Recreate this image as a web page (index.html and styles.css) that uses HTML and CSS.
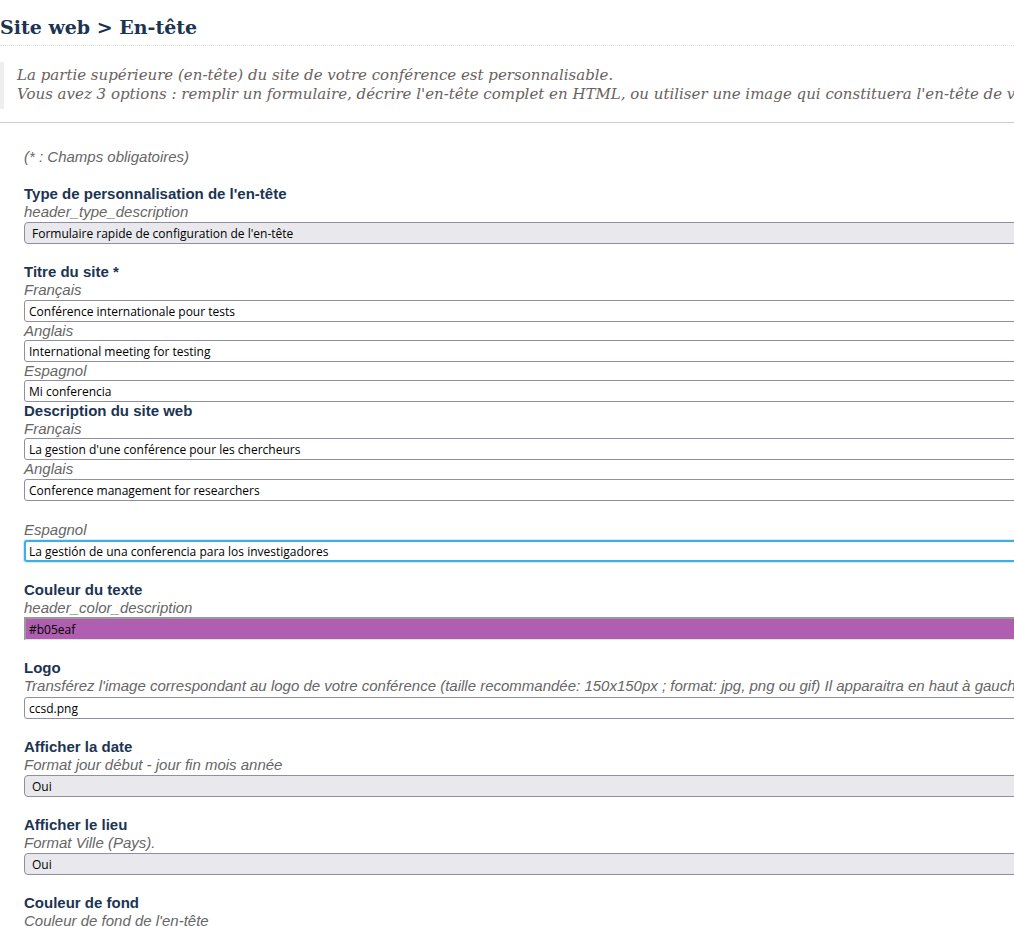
FILE: index.html
```html
<!DOCTYPE html>
<html lang="fr">
<head>
    <meta charset="UTF-8">
    <meta name="viewport" content="width=device-width, initial-scale=1.0">
    <title>Site web &gt; En-tête</title>
    <link rel="stylesheet" href="styles.css">
</head>
<body>

    <div class="page">
        <!-- Titre -->
        <h1 class="page-title">Site web &gt; En-tête</h1>

        <blockquote class="intro">
            La partie supérieure (en-tête) du site de votre conférence est personnalisable.<br>
            Vous avez 3 options : remplir un formulaire, décrire l'en-tête complet en HTML, ou utiliser une image qui constituera l'en-tête de votre site.
        </blockquote>

        <hr class="sep">

        <!-- Formulaire -->
        <form class="header-form">
            <p class="required-note">(* : Champs obligatoires)</p>

            <div class="field">
                <label class="field-label">Type de personnalisation de l'en-tête</label>
                <div class="field-desc">header_type_description</div>
                <select class="select">
                    <option>Formulaire rapide de configuration de l'en-tête</option>
                </select>
            </div>

            <div class="field field-lang">
                <label class="field-label">Titre du site *</label>
                <div class="lang">Français</div>
                <input class="text-input first" type="text" value="Conférence internationale pour tests">
                <div class="lang">Anglais</div>
                <input class="text-input" type="text" value="International meeting for testing">
                <div class="lang">Espagnol</div>
                <input class="text-input" type="text" value="Mi conferencia">
            </div>

            <div class="field">
                <label class="field-label">Description du site web</label>
                <div class="lang">Français</div>
                <input class="text-input" type="text" value="La gestion d'une conférence pour les chercheurs">
                <div class="lang">Anglais</div>
                <input class="text-input first" type="text" value="Conference management for researchers">
                <div class="lang lang-spaced">Espagnol</div>
                <input class="text-input is-focused" type="text" value="La gestión de una conferencia para los investigadores">
            </div>

            <div class="field">
                <label class="field-label">Couleur du texte</label>
                <div class="field-desc">header_color_description</div>
                <input class="color-input" type="text" value="#b05eaf" style="background-color: #b05eaf;">
            </div>

            <div class="field">
                <label class="field-label">Logo</label>
                <div class="field-desc">Transférez l'image correspondant au logo de votre conférence (taille recommandée: 150x150px ; format: jpg, png ou gif) Il apparaitra en haut à gauche de l'en-tête.</div>
                <input class="text-input with-gap" type="text" value="ccsd.png">
            </div>

            <div class="field">
                <label class="field-label">Afficher la date</label>
                <div class="field-desc">Format jour début - jour fin mois année</div>
                <select class="select">
                    <option>Oui</option>
                </select>
            </div>

            <div class="field">
                <label class="field-label">Afficher le lieu</label>
                <div class="field-desc">Format Ville (Pays).</div>
                <select class="select">
                    <option>Oui</option>
                </select>
            </div>

            <div class="field">
                <label class="field-label">Couleur de fond</label>
                <div class="field-desc">Couleur de fond de l'en-tête</div>
            </div>
        </form>
    </div>

</body>
</html>
```

FILE: styles.css
```css
html {
    overflow: hidden;
}

body {
    margin: 0;
    background: white;
}

.page {
    width: 1200px;
}

.page-title {
    margin: 0;
    padding: 17px 0 8px;
    font-family: "DejaVu Serif", serif;
    font-size: 19px;
    line-height: 20px;
    font-weight: bold;
    color: #1b3452;
    border-bottom: 1px dotted #dddddd;
}

.intro {
    margin: 16px 0 0;
    padding: 4px 0 5px 13px;
    border-left: 4px solid #eeeeee;
    font-family: "DejaVu Serif", serif;
    font-style: italic;
    font-size: 15px;
    line-height: 19px;
    color: #69625e;
    white-space: nowrap;
}

.sep {
    margin: 13px 0 0;
    border: none;
    border-top: 1px solid #cccccc;
}

.header-form {
    padding: 0 0 0 24px;
    font-family: "Liberation Sans", Arial, sans-serif;
    font-size: 15px;
    line-height: 18px;
}

.required-note {
    margin: 25px 0 19px;
    font-style: italic;
    color: #666666;
}

.field {
    margin-bottom: 19px;
}

.field-lang {
    margin-bottom: 0;
}

.field-label {
    display: block;
    font-weight: bold;
    color: #1b3452;
}

.field-desc,
.lang {
    font-style: italic;
    color: #666666;
    white-space: nowrap;
}

.lang-spaced {
    margin-top: 20px;
}

.text-input,
.select,
.color-input {
    display: block;
    box-sizing: border-box;
    width: 100%;
    height: 22px;
    margin: 0;
    font-family: "Open Sans", sans-serif;
    font-size: 12px;
    color: #000000;
}

.text-input {
    padding: 0 4px;
    border: 1px solid #8f8f9d;
    border-radius: 3px;
    background: white;
}

.text-input.first {
    margin-top: 1px;
}

.text-input.with-gap {
    margin-top: 2px;
}

.text-input.is-focused {
    margin-top: 1px;
    border: 2px solid #3daee9;
    padding: 0 3px;
    box-shadow: 0 0 0 1px #cdeefb;
    outline: none;
}

.select {
    appearance: none;
    -webkit-appearance: none;
    margin-top: 1px;
    padding: 0 7px;
    border: 1px solid #8f8f9d;
    border-radius: 4px;
    background: #e9e9ed;
}

.color-input {
    height: 23px;
    padding: 0 3px;
    border: none;
    border-top: 2px solid #999999;
    border-left: 2px solid #999999;
    border-bottom: 1px solid #e2e2e2;
}
```
